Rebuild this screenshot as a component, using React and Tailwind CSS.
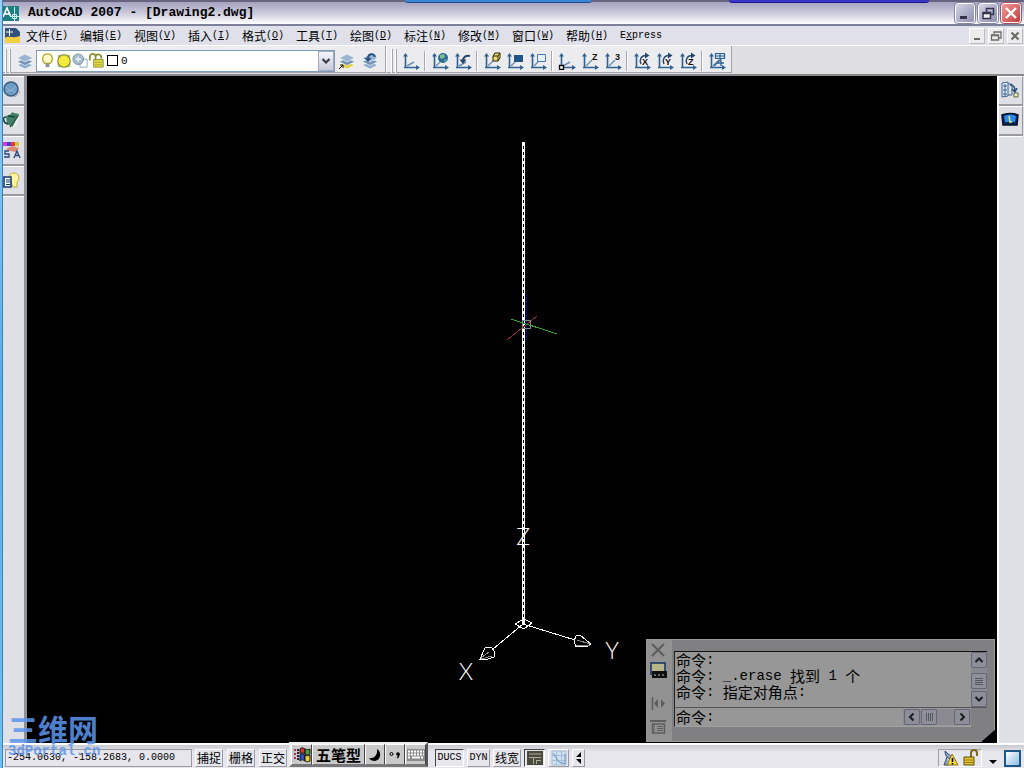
const menus = [
  ['文件', 'F'], ['编辑', 'E'], ['视图', 'V'], ['插入', 'I'], ['格式', 'O'], ['工具', 'T'],
  ['绘图', 'D'], ['标注', 'N'], ['修改', 'M'], ['窗口', 'W'], ['帮助', 'H'],
]

const mono = 'font-["Liberation_Mono","Noto_Sans_CJK_SC",monospace]'
const cjk = 'font-["Noto_Sans_CJK_SC",sans-serif]'

function Svg({ size = 18, box = 18, className = '', children }) {
  return (
    <svg width={size} height={size} viewBox={`0 0 ${box} ${box}`} fill="none" className={`shrink-0 ${className}`} aria-hidden="true">
      {children}
    </svg>
  )
}

const Axes = () => (
  <>
    <path d="M3.5 16V3M2 15.5H15" stroke="#2f6290" strokeWidth="1.6" />
    <path d="M1 4.5L3.5 1 6 4.5zM14 13l4 2.5-4 2.5z" fill="#2f6290" />
  </>
)

function Ucs({ plain, children }) {
  return (
    <Svg>
      <Axes />
      <path d={plain ? 'M5 14l7-4' : 'M5 14l6-6'} stroke="#6f93b5" strokeWidth="1.5" />
      {children}
    </Svg>
  )
}

const Letter = ({ x = 11, y = 8, children }) => (
  <text x={x} y={y} fontSize="9" fontWeight="700" fontFamily="Liberation Sans, sans-serif" fill="#111">{children}</text>
)

const Rotate = ({ axis }) => (
  <Svg>
    <Axes />
    <path d="M8 12C6 8 8 3.5 13 3.5" stroke="#23476b" strokeWidth="1.5" />
    <path d="M12 .5L16.5 3.5 12 6.5z" fill="#23476b" />
    <Letter x={9} y={13}>{axis}</Letter>
  </Svg>
)

const ucsGroups = [
  [['UCS', <Ucs plain />]],
  [
    ['World', <Ucs><circle cx="12" cy="6" r="5" fill="#2a6a9c" /><path d="M9 3l4-1 1 3-3 2-2-1zM13 8l3-1-2 3z" fill="#7fc08a" /></Ucs>],
    ['Previous', <Ucs plain><path d="M16 4c-4-1-7 1-7 5" stroke="#23476b" strokeWidth="2" /><path d="M5.5 7.5h7L9 12z" fill="#23476b" /></Ucs>],
  ],
  [
    ['Face', <Ucs><path d="M10 4l2-3h5v5l-2 3h-5z" fill="#f0dc6a" stroke="#2b2508" /><path d="M10 4h5v5M15 4l2-3" stroke="#2b2508" /></Ucs>],
    ['Object', <Ucs><path d="M8 3h9v7H8z" fill="#1f5686" /></Ucs>],
    ['View', <Ucs><path d="M8.5 2.5h8v7h-8z" fill="#e6f1fa" stroke="#4c7aa4" /></Ucs>],
  ],
  [
    ['Origin', <Ucs plain><path d="M1.5 13.5h4v4h-4z" fill="#fff" stroke="#000" strokeWidth="1.3" /></Ucs>],
    ['Z Axis', <Ucs><Letter>Z</Letter></Ucs>],
    ['3 Point', <Ucs><Letter>3</Letter></Ucs>],
  ],
  [
    ['Rotate X', <Rotate axis="X" />],
    ['Rotate Y', <Rotate axis="Y" />],
    ['Rotate Z', <Rotate axis="Z" />],
  ],
  [['Apply', <Ucs><path d="M7.5 1.5h9v5h-9zM12 1.5v5M7.5 4h9" fill="#d4e6f4" stroke="#2f6290" strokeWidth="1.2" /><path d="M6 14l7-7M9 11h7M13 8v6" stroke="#2f6290" strokeWidth="1.3" /></Ucs>]],
]

const Layers = ({ low = '#8fadcb' }) => (
  <>
    <path d="M1 13l8-3 8 3-8 4z" fill={low} stroke="#fff" strokeWidth=".6" />
    <path d="M1 9.5l8-3 8 3-8 4z" fill="#6f91b5" stroke="#fff" strokeWidth=".6" />
    <path d="M1 6l8-4 8 4-8 4z" fill="#9bb5d2" stroke="#fff" strokeWidth=".6" />
  </>
)

function ToolButton({ label, children }) {
  return (
    <button type="button" aria-label={label} title={label} className="flex h-6 w-[23px] items-center justify-center">
      {children}
    </button>
  )
}

const Grip = () => (
  <span className="flex h-6 gap-[2px]">
    <span className="w-[2px] border-l border-white bg-[#a5a5ad]" />
    <span className="w-[2px] border-l border-white bg-[#a5a5ad]" />
  </span>
)

function TitleBar() {
  const base = 'flex size-5 items-center justify-center rounded-[3px] border border-white bg-linear-to-br'
  return (
    <header className="flex h-[26px] items-center border-t-2 border-b-2 border-t-[#68637f] border-b-[#7c8099] bg-linear-to-b from-[#a5a2c0] via-[#cbcada] to-white pr-[3px]">
      <Svg size={17} box={17}>
        <path d="M0 1h16v15H0z" fill="#1f7f80" />
        <path d="M0 12L4 3l4 9M2 9h5" stroke="#fff" strokeWidth="1.6" />
        <path d="M11.5 2v14M7 11.5h9M9.5 9.5h4v4h-4z" stroke="#c8f2ec" />
      </Svg>
      <h1 className={`ml-2 text-[13px] leading-5 font-bold text-black ${mono}`}>AutoCAD 2007 - [Drawing2.dwg]</h1>
      <div className="ml-auto flex gap-[3px]">
        <button type="button" aria-label="Minimize" className={`${base} from-[#d5d5e6] to-[#8d8fb0] outline outline-[#8486a4]`}>
          <Svg><path d="M4 12h7v3H4z" fill="#33344c" /></Svg>
        </button>
        <button type="button" aria-label="Restore" className={`${base} from-[#d5d5e6] to-[#8d8fb0] outline outline-[#8486a4]`}>
          <Svg><path d="M7.5 8V4.5h7v6H12M7 4.5h8" stroke="#33344c" strokeWidth="1.5" /><path d="M4 8.5h7.5v6H4zM4 9.5h7" stroke="#33344c" strokeWidth="1.5" fill="#eee" /></Svg>
        </button>
        <button type="button" aria-label="Close" className={`${base} from-[#f09a98] to-[#c0393f] outline outline-[#a4545e]`}>
          <Svg><path d="M4 4l10 10M14 4L4 14" stroke="#fff" strokeWidth="2.4" /></Svg>
        </button>
      </div>
    </header>
  )
}

function MenuBar() {
  const mdi = 'flex h-4 w-4 items-center justify-center border border-r-[#bcbcc0] border-b-[#bcbcc0] border-white bg-[#ececed]'
  return (
    <nav className="flex h-[20px] items-center border-b border-white bg-[#dfe0ea] pr-px pl-[2px]">
      <Svg size={16} box={16}>
        <path d="M0 0h11l4 4v11H0z" fill="#31527c" />
        <path d="M1 4h7M4.5 1v7" stroke="#fff" />
        <path d="M0 10c4-3 6 1 15-2v7H0z" fill="#f2cf3f" />
      </Svg>
      <div className="ml-[5px] flex text-black">
        {menus.map(([name, key]) => (
          <button key={key} type="button" className={`flex w-[54px] items-center text-xs leading-4 ${cjk}`}>
            {name}
            <span className={`text-[10px] ${mono}`}>(<u>{key}</u>)</span>
          </button>
        ))}
        <button type="button" className={`text-[10px] leading-4 ${mono}`}>E<u>x</u>press</button>
      </div>
      <div className="ml-auto flex gap-[3px]">
        <button type="button" aria-label="Minimize drawing" className={mdi}>
          <Svg size={14} box={14}><path d="M4 9h6v2H4z" fill="#6b6b66" /></Svg>
        </button>
        <button type="button" aria-label="Restore drawing" className={mdi}>
          <Svg size={14} box={14}><path d="M5 5V3h7v6h-2M5 3h7M2.5 6h7v5h-7zM2.5 6.5h7" stroke="#6b6b66" strokeWidth="1.3" /></Svg>
        </button>
        <button type="button" aria-label="Close drawing" className={mdi}>
          <Svg size={14} box={14}><path d="M3.5 3.5l7 7M10.5 3.5l-7 7" stroke="#6b6b66" strokeWidth="2.2" /></Svg>
        </button>
      </div>
    </nav>
  )
}

function LayerSelect() {
  return (
    <div className="flex h-[22px] w-[299px] items-center border border-[#7f9db9] bg-white pl-[2px]">
      <Svg size={17}>
        <path d="M6 12C2 8 4 2 9 2s7 6 3 10z" fill="#fffbc4" stroke="#b6a72c" strokeWidth="1.3" />
        <path d="M7 12h4v4H7z" fill="#8e9096" />
      </Svg>
      <Svg size={16}>
        <path d="M2 2h14v14H2z" fill="#b8c872" />
        <circle cx="9" cy="9" r="7" fill="#f4e93c" stroke="#77863a" strokeWidth="1.2" />
      </Svg>
      <Svg size={16}>
        <path d="M9 7h8v9H9z" fill="#fff" stroke="#8ba4b8" />
        <circle cx="7" cy="7" r="6" fill="#a7bccc" stroke="#7892a5" />
        <path d="M4 7h6M7 4v6" stroke="#e7f1f8" strokeWidth="1.5" />
      </Svg>
      <Svg size={17}>
        <path d="M2 9V5c0-4 6-4 6 0v4M8 5c1-4 7-3 6 2" stroke="#8a8f2c" strokeWidth="1.8" />
        <path d="M6 8h10v8H6z" fill="#e3dc49" stroke="#8a8f2c" />
        <path d="M7 11h8M7 13.5h8" stroke="#a9a52f" />
      </Svg>
      <span className="ml-[2px] size-[11px] border border-black bg-white" />
      <select aria-label="图层" defaultValue="0" className={`ml-[3px] h-full min-w-0 flex-1 appearance-none bg-white text-[11px] leading-4 text-black outline-none ${mono}`}>
        <option value="0">0</option>
      </select>
      <span className="pointer-events-none flex h-5 w-4 items-center justify-center border border-[#a5a9bd] bg-linear-to-b from-[#f4f4fa] to-[#c9cada]">
        <Svg size={12} box={12}><path d="M2.5 4l3.5 3.5L9.5 4" stroke="#38394a" strokeWidth="2.2" /></Svg>
      </span>
    </div>
  )
}

function Toolbars() {
  return (
    <div className="flex h-[30px] items-start border-b-2 border-[#87878a] bg-[#dfdfe2]">
      <div className="flex h-[27px] items-center border-r border-b border-[#a2a2aa] bg-[#ececee] pt-[3px] pr-1 pl-[2px]">
        <Grip />
        <span className="ml-[2px] flex"><ToolButton label="图层特性管理器"><Svg><Layers /></Svg></ToolButton></span>
        <LayerSelect />
        <ToolButton label="将对象的图层置为当前">
          <Svg><Layers low="#e0cc3e" /><path d="M1 17l4-4M2 13h3v3" stroke="#111" /></Svg>
        </ToolButton>
        <ToolButton label="上一个图层">
          <Svg><Layers /><path d="M14 5c-1-4-7-4-7 2" stroke="#254f7d" strokeWidth="2" /><path d="M3.5 6h7L7 10z" fill="#254f7d" /></Svg>
        </ToolButton>
      </div>
      <div className="flex h-[27px] items-center border-r border-b border-l border-[#a2a2aa] border-l-white bg-[#ececee] pt-[3px] pr-[3px] pl-1">
        <Grip />
        <div className="ml-[2px] flex items-center">
          {ucsGroups.map((group, i) => (
            <div key={i} className="flex items-center">
              {i > 0 && <span className="mx-[2px] h-5 w-[2px] border-r border-white bg-[#a8a8b0]" />}
              {group.map(([label, icon]) => <ToolButton key={label} label={label}>{icon}</ToolButton>)}
            </div>
          ))}
        </div>
      </div>
    </div>
  )
}

const leftTools = [
  ['球体', <Svg key="s"><circle cx="8" cy="8" r="7" fill="#6c9cc4" stroke="#3a5c7d" strokeWidth="1.5" /><path d="M3 6l5 4 5-5M3 11l5-2 5 2" stroke="#8fb5d4" /><path d="M11 16c3-1 5-3 6-6" stroke="#aaa" /></Svg>],
  ['渲染', <Svg key="t"><path d="M3 5l5-2 1-2 2 1 5 1-1 7-5 6-6-3z" fill="#3f8068" /><path d="M3 6c-4 0-3 6 2 7M5 5l7 1" stroke="#1d4437" strokeWidth="1.5" /><path d="M15 5l-6 12 4-2 4-9z" fill="#e6efeb" /><path d="M15 5L7 16" stroke="#35584b" strokeWidth="1.3" /></Svg>],
  ['材质', <Svg key="m"><path d="M0 1h4v4H0z" fill="#e03ac5" /><path d="M4 1h4v4H4z" fill="#4b39dc" /><path d="M8 1h4v4H8z" fill="#e53b31" /><path d="M12 1h4v4h-4z" fill="#d5c43d" /><path d="M3 8l6-3 7 2-3 4-6-1z" fill="#d98a74" /><path d="M6 10H2v3h4v3H1M11 17l3-7 3 7M12 14.5h4" stroke="#274b78" strokeWidth="1.3" /></Svg>],
  ['光源', <Svg key="l"><path d="M8 11C4 6 7 2 11 2s7 5 3 9v5h-4z" fill="#fff59a" stroke="#c2a73b" /><path d="M1 6h7v10H1z" fill="#fff" stroke="#153d70" strokeWidth="1.6" /><path d="M3 9h4M3 11h4M3 13.5h4" stroke="#153d70" /></Svg>],
]

const rightTools = [
  ['设计中心', <Svg key="d"><path d="M1 2l6-1v14l-6 1z" fill="#dfeaf6" stroke="#3b668f" /><path d="M3 4h2v2H3zM3 8h2v2H3zM3 12h2v2H3zM7 3h4v11H7" stroke="#3b668f" /><path d="M9 4c4 0 5 2 5 6M11 8l3 3 2-4" stroke="#244f7c" strokeWidth="1.5" /><path d="M13 12h4v4h-4z" fill="#eef3c8" stroke="#55663b" /></Svg>],
  ['面板', <Svg key="p"><path d="M1 4c4-2 12-2 16 0l-1 10H2z" fill="#0d2a5a" stroke="#071226" strokeWidth="1.5" /><path d="M3 5c4-2 8-2 12 0l-1 6H4z" fill="#2a8af0" /><path d="M8 5l1 6h2" stroke="#f1ef68" strokeWidth="1.3" /></Svg>],
]

function Rail({ tools, side }) {
  return (
    <aside className={side === 'left' ? 'w-6 shrink-0 border-r-3 border-[#909096] bg-[#dfdfe6]' : 'w-[27px] shrink-0 border-l-2 border-white bg-[#dfdfe6] pr-px'}>
      {tools.map(([label, icon]) => (
        <button key={label} type="button" aria-label={label} title={label} className={`flex h-[30px] w-full items-center border-t border-b-2 border-t-white border-b-[#9a9aa0] pb-[2px] ${side === 'left' ? '' : 'border-r border-r-[#9a9aa0] pl-[2px]'}`}>
          {icon}
        </button>
      ))}
      <div className="h-px bg-white" />
    </aside>
  )
}

function Drawing() {
  return (
    <svg viewBox="27 76 970 667" className="absolute inset-0 h-full w-full" fill="none" role="img" aria-label="Model space">
      <path d="M526.5 294V340" stroke="#0c0c8c" />
      <path d="M522 142h3v482h-3z" fill="#fff" />
      <path d="M523.5 146V620" stroke="#000" strokeDasharray="3 3" />
      <g shapeRendering="crispEdges">
        <path d="M507 340L537 316" stroke="#9c2424" />
        <path d="M511 319L557 334" stroke="#2fa52f" />
        <path d="M522.5 320.5h8v8h-8z" stroke="#758a8c" />
        <path d="M523 624L493 649M523 624L575 640M515 624l9-5 8 4-8 6z" stroke="#fff" />
        <path d="M480 659l5-11 6-1 4 5-1 5-6 2zM574 641l2-5 4-1 11 9-3 2-12 1z" stroke="#fff" />
        <path d="M481 658l8-6M481 659l11-3M590 644l-13-4M590 645l-14 0" stroke="#8a8a8a" />
      </g>
      <g fill="#fff" fontFamily="Lato, sans-serif" fontWeight="300" fontSize="23" textAnchor="middle">
        <text x="523" y="545">Z</text>
        <text x="466" y="680">X</text>
        <text x="612" y="659">Y</text>
      </g>
    </svg>
  )
}

function ScrollButton({ label, d }) {
  return (
    <button type="button" aria-label={label} className="flex size-4 shrink-0 items-center justify-center rounded-[2px] border border-[#66667a] bg-[#8e8e98]">
      <Svg size={12} box={12}><path d={d} stroke="#1b1b24" strokeWidth="2" /></Svg>
    </button>
  )
}

function CommandWindow() {
  const num = `text-[14px] whitespace-pre ${mono}`
  const line = 'flex h-4 items-center'
  return (
    <section aria-label="命令行" className={`absolute right-[2px] bottom-px flex h-[103px] w-[349px] border border-[#9a9a9a] bg-[#808082] text-[15px] leading-4 text-black [clip-path:polygon(0_0,100%_0,100%_88%,96%_100%,0_100%)] ${cjk}`}>
      <div className="flex w-[25px] shrink-0 flex-col items-center bg-[#929292] pt-[3px] pr-[3px]">
        <button type="button" aria-label="关闭"><Svg size={14} box={14}><path d="M1 1l12 12M13 1L1 13" stroke="#5d5d5d" strokeWidth="2" /></Svg></button>
        <Svg size={17} box={17} className="mt-[5px]">
          <path d="M1 1h14v11H1z" fill="#b9b58a" stroke="#152e63" strokeWidth="1.5" />
          <path d="M2 9h15v7H2z" fill="#101010" />
          <path d="M4 12.5l2 1M8 13h2M12 13h2" stroke="#bbb" />
        </Svg>
        <button type="button" aria-label="自动隐藏" className="mt-[17px]"><Svg size={15} box={15}><path d="M1.5 1v13" stroke="#5d5d5d" strokeWidth="1.5" /><path d="M7 3v9L3 7.5zM10 3v9l4-4.5z" fill="#5d5d5d" /></Svg></button>
        <button type="button" aria-label="特性" className="mt-2"><Svg size={16} box={16}><path d="M0 1h16v2H0z" fill="#5d5d5d" /><path d="M2.5 5h12v9h-12z" stroke="#5d5d5d" strokeWidth="1.5" /><path d="M4 5v9M7 7.5h6M7 9.5h6M7 11.5h6" stroke="#5d5d5d" /></Svg></button>
      </div>
      <div className="mt-[11px] mr-[7px] ml-[2px] flex min-w-0 flex-1 flex-col">
        <div className="flex h-[57px] border-t border-b border-l border-[#555] border-t-[#111] border-l-[#222] bg-[#979797]">
          <div className="min-w-0 flex-1 pl-px">
            <p className={line}>命令<span className={num}>:</span></p>
            <p className={line}>命令<span className={num}>: _.erase </span>找到<span className={num}> 1 </span>个</p>
            <p className={line}>命令<span className={num}>: </span>指定对角点<span className={num}>:</span></p>
          </div>
          <div className="flex w-4 flex-col bg-[#898990]">
            <ScrollButton label="向上滚动" d="M2.5 8L6 4.5 9.5 8" />
            <span className="mt-auto mb-[2px] flex h-4 flex-col items-center justify-center gap-px rounded-[2px] border border-[#66667a] bg-[#90909a]">
              <i className="h-px w-2 bg-[#55555f]" /><i className="h-px w-2 bg-[#55555f]" /><i className="h-px w-2 bg-[#55555f]" /><i className="h-px w-2 bg-[#55555f]" />
            </span>
            <ScrollButton label="向下滚动" d="M2.5 4L6 7.5 9.5 4" />
          </div>
        </div>
        <div className="mr-4 flex h-[19px] items-center border-b border-l border-b-[#a0a0a0] border-l-[#222] bg-[#979797] pl-px">
          <label htmlFor="command" className={line}>命令<span className={num}>:</span></label>
          <input id="command" className={`h-4 min-w-0 flex-1 bg-transparent outline-none ${num}`} />
          <div className="flex w-[68px] items-center gap-px bg-[#8a8a90] px-px">
            <ScrollButton label="向左滚动" d="M7.5 2.5L4 6l3.5 3.5" />
            <span className="mr-auto flex size-4 items-center justify-center gap-px rounded-[2px] border border-[#66667a] bg-[#90909a]">
              <i className="h-2 w-px bg-[#55555f]" /><i className="h-2 w-px bg-[#55555f]" /><i className="h-2 w-px bg-[#55555f]" /><i className="h-2 w-px bg-[#55555f]" />
            </span>
            <ScrollButton label="向右滚动" d="M4.5 2.5L8 6 4.5 9.5" />
          </div>
        </div>
      </div>
    </section>
  )
}

function InputMethodBar() {
  const cell = 'flex h-[21px] items-center justify-center border border-t-white border-l-white border-r-[#444] border-b-[#777] bg-[#c9c9c9]'
  return (
    <div className="absolute bottom-0 left-[-2px] flex h-[25px] w-[139px] border-2 border-[#eee] border-r-[#555] border-b-[#777] bg-[#c9c9c9]">
      <button type="button" aria-label="输入法" className={`${cell} w-[21px]`}>
        <Svg>
          <path d="M7 3c2-2 3-1 5 0v5c-2-1-3-2-5 0z" fill="#d8362b" stroke="#111" />
          <path d="M12 3c2 1 3 1 5 0v5c-2 1-3 1-5 0z" fill="#48a13c" stroke="#111" />
          <path d="M7 9c2-2 3-1 5 0v6c-2-1-3-2-5 0z" fill="#2e4fc9" stroke="#111" />
          <path d="M12 9c2 1 3 1 5 0v6c-2 1-3 1-5 0z" fill="#e8d03c" stroke="#111" />
          <path d="M2 3v12" stroke="#b03050" strokeWidth="2" strokeDasharray="2 2" />
          <path d="M5 3v12" stroke="#223" strokeWidth="2" strokeDasharray="2 1" />
        </Svg>
      </button>
      <button type="button" className={`${cell} w-[53px] text-[15px] leading-5 font-bold text-black ${cjk}`}>五笔型</button>
      <button type="button" aria-label="半角" className={`${cell} w-5`}>
        <Svg size={16} box={16}><path d="M10 2c5 3 4 11-2 12-3 0-5-1-6-3 5 1 9-3 8-9z" fill="#000" /></Svg>
      </button>
      <button type="button" aria-label="标点" className={`${cell} w-5`}>
        <Svg size={16} box={16}><circle cx="4.5" cy="7" r="1.5" stroke="#000" /><circle cx="11" cy="7" r="1.8" fill="#000" /><path d="M12 7c0 2 0 3-2 4" stroke="#000" strokeWidth="1.3" /></Svg>
      </button>
      <button type="button" aria-label="软键盘" className={`${cell} w-[21px]`}>
        <Svg>
          <path d="M0 3h18v12H0z" fill="#8b8b8b" />
          <path d="M1 5.5h16M1 8.5h16M1 11.5h3M14 11.5h3" stroke="#fff" strokeWidth="1.8" strokeDasharray="2 1" />
          <path d="M5 11.5h8" stroke="#fff" strokeWidth="1.8" />
        </Svg>
      </button>
    </div>
  )
}

function StatusBar() {
  const up = 'flex h-[18px] items-center justify-center border border-white border-r-[#9a9aa0] border-b-[#9a9aa0] text-xs leading-4'
  const down = 'flex h-[18px] items-center justify-center border border-[#444] border-r-white border-b-white leading-4'
  return (
    <footer className="flex h-[25px] items-end border-t-2 border-white bg-linear-to-b from-[#c9c9d0] to-[#e6e6ec] to-30% pb-px text-black">
      <output className={`ml-[2px] flex h-[18px] w-[187px] items-center border border-[#9a9aa0] pl-px text-[10px] leading-4 ${mono}`}>
        -254.0630, -158.2683, 0.0000
      </output>
      <div className={`ml-[3px] flex gap-1 ${cjk}`}>
        {['捕捉', '栅格', '正交'].map((name) => (
          <button key={name} type="button" className={`${up} w-7`}>{name}</button>
        ))}
      </div>
      <div className="relative ml-1 h-[18px] w-36"><InputMethodBar /></div>
      <div className="flex gap-[3px]">
        <button type="button" aria-pressed="true" className={`${down} w-[29px] text-[10px] ${mono}`}>DUCS</button>
        <button type="button" className={`${up} w-[23px]`}><span className={`text-[10px] ${mono}`}>DYN</span></button>
        <button type="button" className={`${up} w-7 ${cjk}`}>线宽</button>
        <button type="button" aria-label="模型" aria-pressed="true" className={`${down} w-[21px]`}>
          <Svg size={16} box={16}><path d="M0 1h16v14H0z" fill="#4a4a3e" /><path d="M2 4h12M2 7.5h12M6.5 7v7M9 10.5h5M9.5 10v4" stroke="#aeb096" /></Svg>
        </button>
        <button type="button" aria-label="布局" className={`${up} w-[21px]`}>
          <Svg size={16} box={16}><path d="M1 1h14v14H1z" fill="#cfe0f0" stroke="#a4bdd6" /><path d="M5.5 1v14M10.5 1v14M1 5.5h14M1 10.5h14" stroke="#a3bfda" /><path d="M2 3l6 9 6 2V4" stroke="#6a93bd" /></Svg>
        </button>
        <button type="button" aria-label="上下" className={`${up} w-[13px]`}>
          <Svg size={12} box={12}><path d="M8 0v5H3zM3 7h5v5z" fill="#000" /></Svg>
        </button>
      </div>
      <div className="ml-auto flex items-center pr-[3px]">
        <div className="flex h-[18px] w-[44px] items-center justify-around border border-r-white border-b-white border-[#a0a0a6]">
          <Svg>
            <path d="M4 2c0 6 4 9 9 8zM6 8l-3 8h5" fill="#8ea2c8" stroke="#3a5078" />
            <path d="M11 5l6 11H6z" fill="#f7dc39" stroke="#8c7610" />
            <path d="M11.5 9v4M11.5 14v1.5" stroke="#000" strokeWidth="1.6" />
          </Svg>
          <Svg>
            <path d="M9 8V4c0-4 6-4 6 0v3" stroke="#7c6a16" strokeWidth="2" />
            <path d="M2 8h10v8H2z" fill="#e8c52c" stroke="#5d4d0d" />
            <path d="M3 11h8M3 13.5h8" stroke="#94791a" />
          </Svg>
        </div>
        <button type="button" aria-label="状态栏菜单" className="flex h-[18px] w-[22px] items-end justify-center pb-px">
          <Svg size={8} box={8}><path d="M0 2h8L4 6z" fill="#000" /></Svg>
        </button>
        <button type="button" aria-label="全屏显示" className="size-[17px] border-2 border-[#1e5688] bg-linear-to-br from-white to-[#8fbce2]" />
      </div>
    </footer>
  )
}

export default function App() {
  return (
    <div className="relative flex min-h-screen w-full overflow-hidden bg-[#dfdfe6]">
      <div className="w-[3px] shrink-0 border-r border-[#3c7fb8] bg-linear-to-b from-[#9bd2f5] via-[#55aee6] to-[#6fc0ee]" />
      <div className="flex min-w-0 flex-1 flex-col">
        <TitleBar />
        <MenuBar />
        <Toolbars />
        <main className="flex flex-1">
          <Rail tools={leftTools} side="left" />
          <div className="relative min-w-0 flex-1 overflow-hidden bg-black">
            <Drawing />
            <CommandWindow />
          </div>
          <Rail tools={rightTools} side="right" />
        </main>
        <StatusBar />
      </div>
      <div className="absolute top-0 left-[405px] h-[3px] w-[187px] rounded-b-[3px] border-b border-[#1d4f90] bg-[#3b86d4]" />
      <div className="absolute top-0 left-[729px] h-[3px] w-[200px] rounded-b-[3px] border-b border-[#1c1a86] bg-[#3a35c8]" />
      <div className="pointer-events-none absolute bottom-[9px] left-2 text-[#5b96ee] opacity-85">
        <p className={`text-[30px] leading-[30px] font-bold ${cjk}`}>三维网</p>
        <p className={`text-[14px] leading-[16px] font-bold ${mono}`}>3dPortal.cn</p>
      </div>
    </div>
  )
}
